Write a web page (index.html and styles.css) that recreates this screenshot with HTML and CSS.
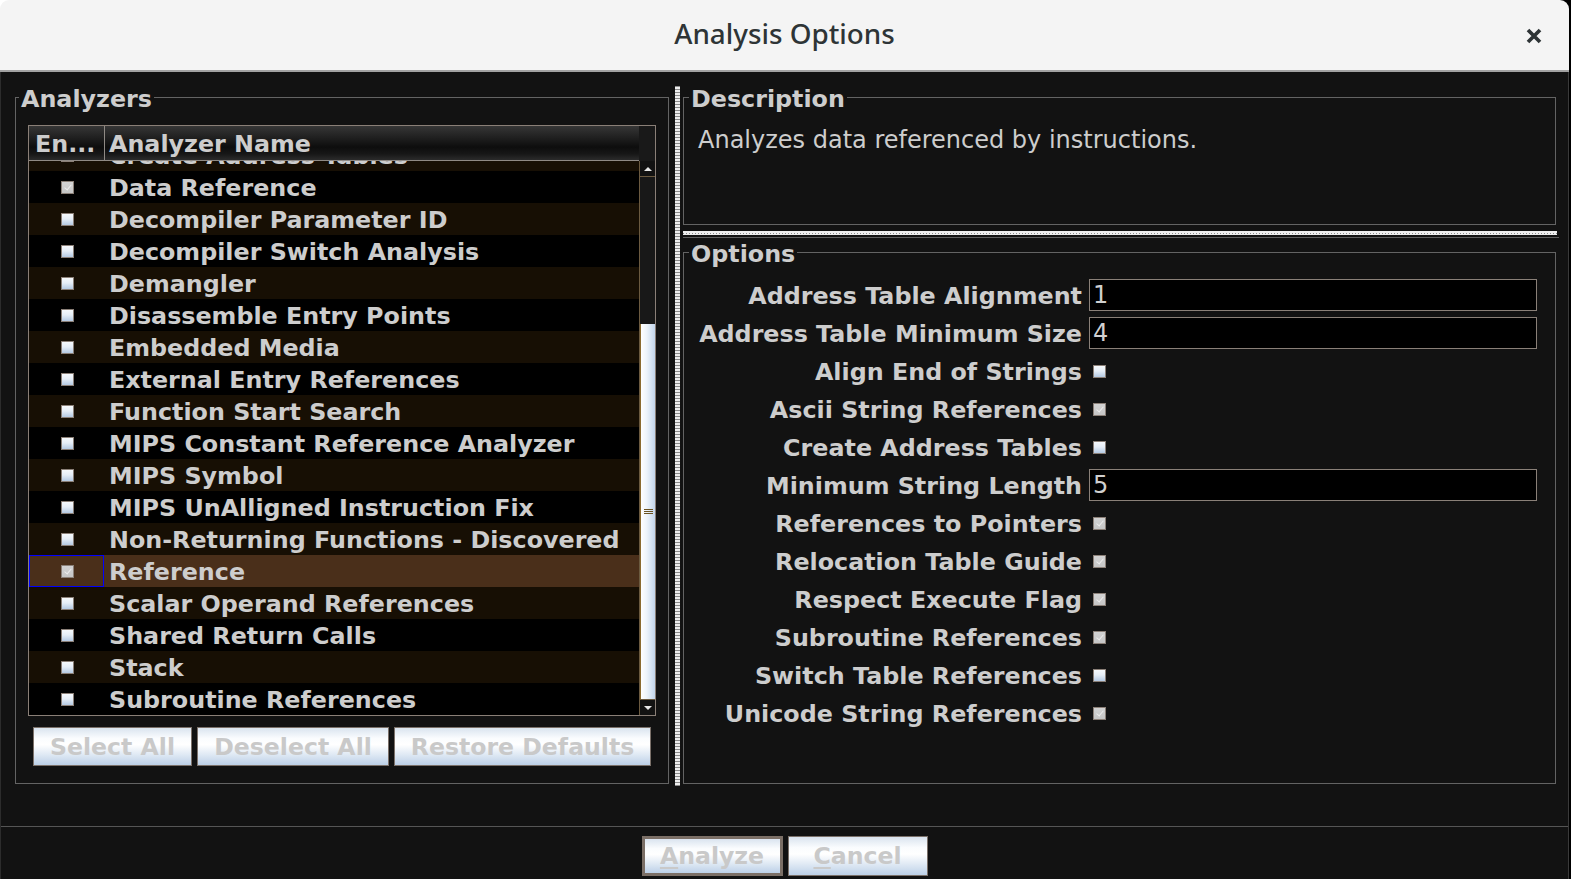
FILE: index.html
```html
<!DOCTYPE html>
<html lang="en">
<head>
<meta charset="utf-8">
<title>Analysis Options</title>
<link rel="stylesheet" href="styles.css">
</head>
<body>
<div class="window">
  <header class="titlebar">
    <span></span>
    <span class="title">Analysis Options</span>
    <span class="close-wrap">
      <svg class="close" width="16" height="16" viewBox="0 0 16 16"><path d="M2 2 L14 14 M14 2 L2 14" stroke="#2e3436" stroke-width="3.7" stroke-linecap="butt" fill="none"/></svg>
    </span>
  </header>

  <div class="content">
    <div class="split">
      <fieldset class="group analyzers">
        <legend>Analyzers</legend>
        <div class="table">
          <div class="thead">
            <div class="th th-en">En...</div>
            <div class="th th-name">Analyzer Name</div>
            <div class="corner"></div>
          </div>
          <div class="tbody">
            <div class="viewport">
              <div class="rows">
                <div class="row odd"><div class="cb-cell"><span class="cb"></span></div><div class="name">Create Address Tables</div></div>
                <div class="row even"><div class="cb-cell"><span class="cb on"></span></div><div class="name">Data Reference</div></div>
                <div class="row odd"><div class="cb-cell"><span class="cb"></span></div><div class="name">Decompiler Parameter ID</div></div>
                <div class="row even"><div class="cb-cell"><span class="cb"></span></div><div class="name">Decompiler Switch Analysis</div></div>
                <div class="row odd"><div class="cb-cell"><span class="cb"></span></div><div class="name">Demangler</div></div>
                <div class="row even"><div class="cb-cell"><span class="cb"></span></div><div class="name">Disassemble Entry Points</div></div>
                <div class="row odd"><div class="cb-cell"><span class="cb"></span></div><div class="name">Embedded Media</div></div>
                <div class="row even"><div class="cb-cell"><span class="cb"></span></div><div class="name">External Entry References</div></div>
                <div class="row odd"><div class="cb-cell"><span class="cb"></span></div><div class="name">Function Start Search</div></div>
                <div class="row even"><div class="cb-cell"><span class="cb"></span></div><div class="name">MIPS Constant Reference Analyzer</div></div>
                <div class="row odd"><div class="cb-cell"><span class="cb"></span></div><div class="name">MIPS Symbol</div></div>
                <div class="row even"><div class="cb-cell"><span class="cb"></span></div><div class="name">MIPS UnAlligned Instruction Fix</div></div>
                <div class="row odd"><div class="cb-cell"><span class="cb"></span></div><div class="name">Non-Returning Functions - Discovered</div></div>
                <div class="row selected"><div class="cb-cell focus"><span class="cb on"></span></div><div class="name">Reference</div></div>
                <div class="row odd"><div class="cb-cell"><span class="cb"></span></div><div class="name">Scalar Operand References</div></div>
                <div class="row even"><div class="cb-cell"><span class="cb"></span></div><div class="name">Shared Return Calls</div></div>
                <div class="row odd"><div class="cb-cell"><span class="cb"></span></div><div class="name">Stack</div></div>
                <div class="row even"><div class="cb-cell"><span class="cb"></span></div><div class="name">Subroutine References</div></div>
              </div>
            </div>
            <div class="vscroll">
              <div class="arrow up"><span class="tri-up"></span></div>
              <div class="track"><div class="thumb"><span class="grip"></span></div></div>
              <div class="arrow down"><span class="tri-down"></span></div>
            </div>
          </div>
        </div>
        <div class="btnrow">
          <button class="btn btn-select">Select All</button>
          <button class="btn btn-deselect">Deselect All</button>
          <button class="btn btn-restore">Restore Defaults</button>
        </div>
      </fieldset>

      <div class="vdivider"><span class="vstripe"></span></div>

      <div class="right">
        <fieldset class="group desc">
          <legend>Description</legend>
          <p class="desc-text">Analyzes data referenced by instructions.</p>
        </fieldset>
        <div class="hsplit"><span class="hstripe"></span><span class="hline"></span></div>
        <fieldset class="group options">
          <legend>Options</legend>
          <div class="opt-grid">
            <label class="opt-label">Address Table Alignment</label><div class="opt-ctl"><div class="field">1</div></div>
            <label class="opt-label">Address Table Minimum Size</label><div class="opt-ctl"><div class="field">4</div></div>
            <label class="opt-label">Align End of Strings</label><div class="opt-ctl"><span class="cb"></span></div>
            <label class="opt-label">Ascii String References</label><div class="opt-ctl"><span class="cb on"></span></div>
            <label class="opt-label">Create Address Tables</label><div class="opt-ctl"><span class="cb"></span></div>
            <label class="opt-label">Minimum String Length</label><div class="opt-ctl"><div class="field">5</div></div>
            <label class="opt-label">References to Pointers</label><div class="opt-ctl"><span class="cb on"></span></div>
            <label class="opt-label">Relocation Table Guide</label><div class="opt-ctl"><span class="cb on"></span></div>
            <label class="opt-label">Respect Execute Flag</label><div class="opt-ctl"><span class="cb on"></span></div>
            <label class="opt-label">Subroutine References</label><div class="opt-ctl"><span class="cb on"></span></div>
            <label class="opt-label">Switch Table References</label><div class="opt-ctl"><span class="cb"></span></div>
            <label class="opt-label">Unicode String References</label><div class="opt-ctl"><span class="cb on"></span></div>
          </div>
        </fieldset>
      </div>
    </div>

    <div class="footer">
      <button class="dbtn default"><u>A</u>nalyze</button>
      <button class="dbtn"><u>C</u>ancel</button>
    </div>
  </div>
</div>
</body>
</html>
```

FILE: styles.css
```css
html, body {
  margin: 0;
  padding: 0;
  width: 1571px;
  height: 879px;
  overflow: hidden;
  background: linear-gradient(90deg, #ffffff 50%, #000000 50%);
}

.window {
  width: 1569px;
  height: 879px;
  display: flex;
  flex-direction: column;
}

/* ---------- title bar ---------- */
.titlebar {
  height: 70px;
  flex: none;
  background: #f4f4f4;
  border-radius: 9px 9px 0 0;
  border-bottom: 2px solid #a2a2a2;
  display: grid;
  grid-template-columns: 1fr auto 1fr;
  align-items: center;
}
.title {
  font-family: "Noto Sans", "Open Sans", sans-serif;
  font-size: 27.8px;
  font-weight: 500;
  color: #2e3436;
  padding-bottom: 4px;
}
.close-wrap {
  justify-self: end;
  display: flex;
  margin-right: 27px;
  padding-top: 1px;
}
.close { display: block; }

/* ---------- dialog content ---------- */
.content {
  flex: 1;
  background: #121212;
  border-left: 1px solid #2c2c2c;
  border-right: 1px solid #3a3a3a;
  display: flex;
  flex-direction: column;
  font-family: "DejaVu Sans", sans-serif;
  color: #cdcdcd;
}

.split {
  height: 754px;
  flex: none;
  box-sizing: border-box;
  padding: 12px 0 0 14px;
  display: flex;
  align-items: flex-start;
}

.group {
  margin: 0;
  padding: 0;
  border: 1px solid #636363;
  box-sizing: border-box;
  min-width: 0;
}
.group > legend {
  font-weight: bold;
  font-size: 23.8px;
  line-height: 22px;
  color: #cdcdcd;
  padding: 4px 2px 0 2px;
}

/* ---------- analyzers ---------- */
.analyzers {
  width: 654px;
  padding: 15px 12px 17px 12px;
}
.analyzers > legend { margin-left: -9px; }

.table {
  height: 591px;
  box-sizing: border-box;
  border: 1px solid #8a7f77;
  display: flex;
  flex-direction: column;
  background: #000;
}
.thead {
  height: 35px;
  flex: none;
  box-sizing: border-box;
  display: flex;
}
.th {
  box-sizing: border-box;
  height: 100%;
  border-bottom: 1px solid #8f8a85;
  background: linear-gradient(180deg, #363636 0%, #1f1f1f 35%, #0d0d0d 62%, #171717 82%, #2b2b2b 100%);
  font-weight: bold;
  font-size: 23.8px;
  line-height: 34px;
  padding-top: 1px;
  white-space: nowrap;
  overflow: hidden;
}
.th-en {
  width: 76px;
  padding-left: 6px;
  border-right: 1px solid #8f8a85;
}
.th-name {
  flex: 1;
  padding-left: 4px;
}
.corner {
  width: 16px;
  flex: none;
  background: #191919;
}

.tbody {
  flex: 1;
  min-height: 0;
  display: flex;
}
.viewport {
  flex: 1;
  overflow: hidden;
  min-width: 0;
}
.rows { margin-top: -22px; }
.row {
  height: 32px;
  display: flex;
  align-items: flex-start;
  white-space: nowrap;
}
.row.odd { background: #170f04; }
.row.even { background: #000000; }
.row.selected { background: #4a2f1a; }
.cb-cell {
  width: 75px;
  height: 100%;
  flex: none;
  box-sizing: border-box;
  display: flex;
  align-items: center;
  justify-content: center;
  padding-left: 1px;
}
.cb-cell.focus { border: 1px solid #0000ff; }
.name {
  padding-left: 5px;
  padding-top: 2px;
  font-weight: bold;
  font-size: 23.8px;
  line-height: 30px;
}

/* checkbox */
.cb {
  display: inline-block;
  width: 13px;
  height: 13px;
  box-sizing: border-box;
  border: 1px solid #8b8078;
  background: linear-gradient(180deg, #f6f9fc 0%, #e6eef7 45%, #b5cae3 100%);
  position: relative;
  flex: none;
}
.cb.on {
  background: linear-gradient(180deg, #d2d2d2 0%, #c6c6c6 100%);
}
.cb.on::after {
  content: "";
  position: absolute;
  left: 4px;
  top: 1px;
  width: 3px;
  height: 6px;
  border-right: 1px solid #ececec;
  border-bottom: 1px solid #ececec;
  transform: rotate(40deg);
}

/* scrollbar */
.vscroll {
  width: 16px;
  flex: none;
  box-sizing: border-box;
  border-left: 1px solid #6b5a40;
  background: #181818;
  display: flex;
  flex-direction: column;
}
.arrow {
  height: 16px;
  flex: none;
  box-sizing: border-box;
  background: #121212;
  display: flex;
  align-items: center;
  justify-content: center;
}
.arrow.up { border-bottom: 1px solid #6b5a40; }
.arrow.down { border-top: 1px solid #6b5a40; }
.tri-up {
  width: 0; height: 0;
  border-left: 4px solid transparent;
  border-right: 4px solid transparent;
  border-bottom: 4px solid #e8e8e8;
}
.tri-down {
  width: 0; height: 0;
  border-left: 4px solid transparent;
  border-right: 4px solid transparent;
  border-top: 4px solid #e8e8e8;
}
.track {
  flex: 1;
  display: flex;
  flex-direction: column;
}
.thumb {
  margin-top: 147px;
  flex: 1;
  box-sizing: border-box;
  border-left: 1px solid #8b6b2f;
  background: linear-gradient(90deg, #ffffff 0%, #eef4fa 40%, #c2d5eb 100%);
  display: flex;
  align-items: center;
  justify-content: center;
}
.grip {
  width: 9px;
  height: 5px;
  background: repeating-linear-gradient(180deg, #6a5220 0 1px, transparent 1px 2px);
}

/* buttons */
.btnrow {
  display: flex;
  gap: 5px;
  margin-top: 11px;
  padding: 0 4px 0 5px;
}
.btn {
  height: 39px;
  box-sizing: border-box;
  border: 1px solid #7b716a;
  border-radius: 0;
  background: linear-gradient(180deg, #dae4ef 0%, #fafcfe 28%, #ffffff 45%, #dfe9f4 72%, #bcd0e7 100%);
  color: #c9c9c9;
  font-family: "DejaVu Sans", sans-serif;
  font-weight: bold;
  font-size: 23.6px;
  padding: 0;
  white-space: nowrap;
}
.btn-select { width: 159px; }
.btn-deselect { width: 192px; }
.btn-restore { width: 257px; }

/* ---------- split divider ---------- */
.vdivider {
  width: 14px;
  flex: none;
  align-self: stretch;
  display: flex;
  padding-left: 6px;
  padding-top: 2px;
  box-sizing: border-box;
  margin-bottom: 40px;
}
.vstripe {
  width: 5px;
  background-color: #eeeeee;
  background-image: repeating-linear-gradient(180deg, #8a8a8a 0 1px, transparent 1px 3px);
  background-size: 1px 100%;
  background-repeat: repeat-x;
  background-position: 2px 0;
}

/* ---------- right side ---------- */
.right {
  width: 873px;
  height: 700px;
  flex: none;
  display: flex;
  flex-direction: column;
}
.desc {
  height: 141px;
  flex: none;
  padding: 16px 13px 0 14px;
}
.desc > legend { margin-left: -9px; }
.desc-text {
  margin: 0;
  font-size: 24px;
  line-height: 28px;
  white-space: nowrap;
}
.hsplit {
  height: 14px;
  flex: none;
  display: flex;
  flex-direction: column;
}
.hstripe {
  margin-top: 6px;
  height: 4px;
  width: 874px;
  background-color: #eeeeee;
  background-image: repeating-linear-gradient(90deg, #8a8a8a 0 1px, transparent 1px 3px);
  background-size: 100% 1px;
  background-repeat: no-repeat;
  background-position: 0 2px;
}
.hline {
  margin-top: 2px;
  height: 1px;
  width: 876px;
  background: #5e5e5e;
}
.options {
  flex: 1;
  padding: 11px 18px 0 14px;
}
.options > legend { margin-left: -9px; }
.opt-grid {
  display: grid;
  grid-template-columns: 384px 1fr;
  grid-auto-rows: 38px;
  column-gap: 7px;
  align-items: center;
}
.opt-label {
  text-align: right;
  font-weight: bold;
  font-size: 23.8px;
  white-space: nowrap;
  padding-top: 2px;
}
.opt-ctl {
  display: flex;
  align-items: center;
}
.opt-ctl .cb { margin-left: 4px; }
.field {
  flex: 1;
  height: 32px;
  box-sizing: border-box;
  border: 1px solid #8a8078;
  background: #000;
  color: #d0d0d0;
  font-size: 24px;
  line-height: 30px;
  padding-left: 3px;
}

/* ---------- footer ---------- */
.footer {
  flex: 1;
  border-top: 1px solid #555555;
  display: flex;
  justify-content: center;
  align-items: flex-start;
  gap: 5px;
  padding-top: 9px;
}
.dbtn {
  height: 40px;
  width: 140px;
  box-sizing: border-box;
  border: 1px solid #7b716a;
  border-radius: 0;
  background: linear-gradient(180deg, #dae4ef 0%, #fafcfe 28%, #ffffff 45%, #dfe9f4 72%, #bcd0e7 100%);
  color: #c9c9c9;
  font-family: "DejaVu Sans", sans-serif;
  font-weight: bold;
  font-size: 23.6px;
  padding: 0;
}
.dbtn.default {
  width: 141px;
  border: 3px solid #7b6f66;
}
.dbtn u {
  text-decoration-color: #c9c9c9;
  text-underline-offset: 3px;
}
```
